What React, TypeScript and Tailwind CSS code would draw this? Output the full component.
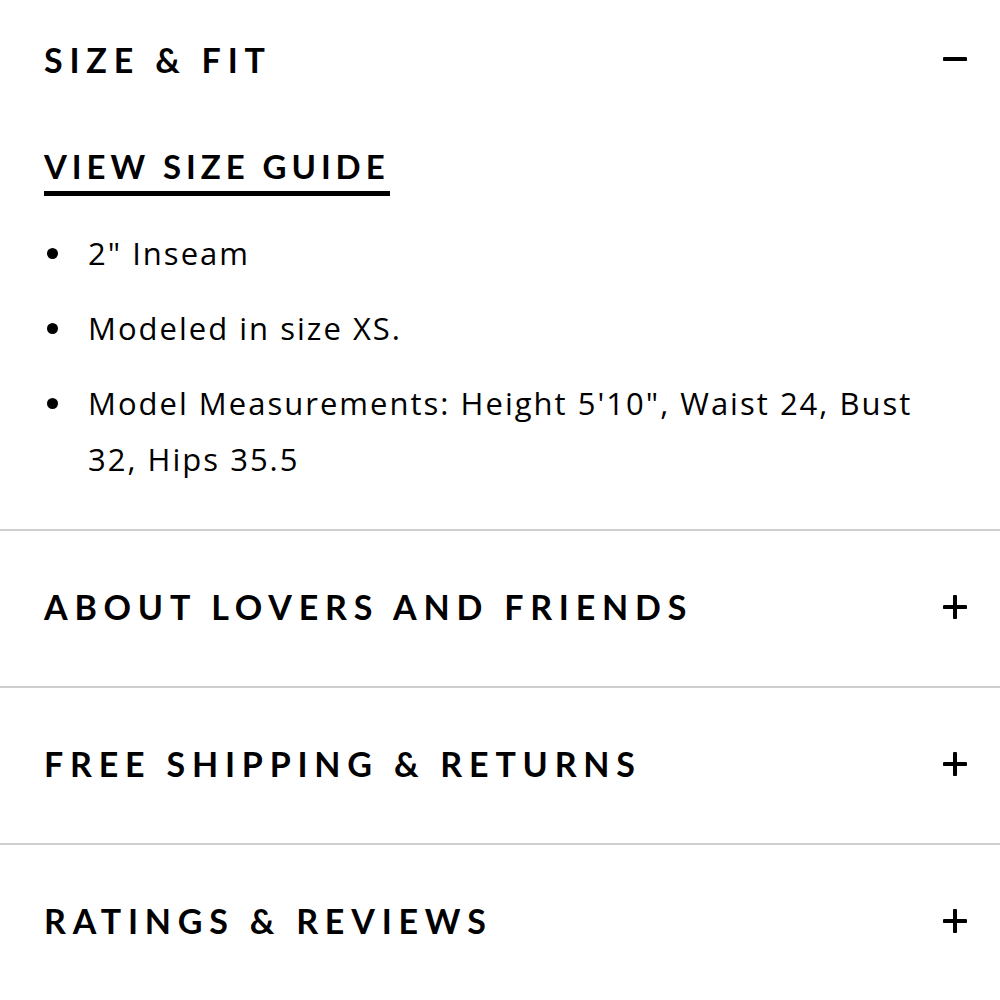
import React from 'react';

const headingFont = { fontFamily: 'Lato, "Liberation Sans", sans-serif' };
const bodyFont = { fontFamily: '"Open Sans", "Liberation Sans", sans-serif' };

const Plus = () => (
    <svg width="24" height="24" viewBox="0 0 24 24" className="shrink-0">
        <path d="M12 1.5v21M1.5 12h21" stroke="#000" strokeWidth="4" strokeLinecap="round" />
    </svg>
);

const Minus = () => (
    <svg width="24" height="24" viewBox="0 0 24 24" className="shrink-0">
        <path d="M1.5 12h21" stroke="#000" strokeWidth="4" strokeLinecap="round" />
    </svg>
);

const sections = ['ABOUT LOVERS AND FRIENDS', 'FREE SHIPPING & RETURNS', 'RATINGS & REVIEWS'];

const bullets = [
    '2" Inseam',
    'Modeled in size XS.',
    'Model Measurements: Height 5\'10", Waist 24, Bust 32, Hips 35.5',
];

export default function App() {
    return (
        <div className="w-[1000px] h-[1000px] bg-white text-black overflow-hidden">
            <div className="pl-[44px] pr-[33px]">
                <div className="h-[118px] flex items-center justify-between">
                    <h2 style={headingFont} className="text-[34px] font-bold tracking-[0.2em]">
                        SIZE &amp; FIT
                    </h2>
                    <Minus />
                </div>
                <div className="pt-[32px]">
                    <a
                        style={headingFont}
                        className="inline-block text-[33px] font-bold tracking-[0.15em] leading-none border-b-[5px] border-black pb-[8px]"
                    >
                        VIEW SIZE GUIDE
                    </a>
                </div>
                <ul style={bodyFont} className="mt-[29px] pb-[42px] text-[31px] leading-[56px] tracking-[0.065em]">
                    {bullets.map((b) => (
                        <li key={b} className="flex mb-[19px] last:mb-0">
                            <span className="w-[44px] shrink-0 flex items-center h-[56px]">
                                <span className="block w-[11px] h-[11px] rounded-full bg-black ml-[3px]" />
                            </span>
                            <span>{b}</span>
                        </li>
                    ))}
                </ul>
            </div>
            {sections.map((s) => (
                <div key={s} className="border-t-2 border-[#cfcfcf]">
                    <div className="h-[155px] pb-[4px] pl-[44px] pr-[33px] flex items-center justify-between">
                        <h2 style={headingFont} className="text-[34px] font-bold tracking-[0.2em]">
                            {s}
                        </h2>
                        <Plus />
                    </div>
                </div>
            ))}
        </div>
    );
}
